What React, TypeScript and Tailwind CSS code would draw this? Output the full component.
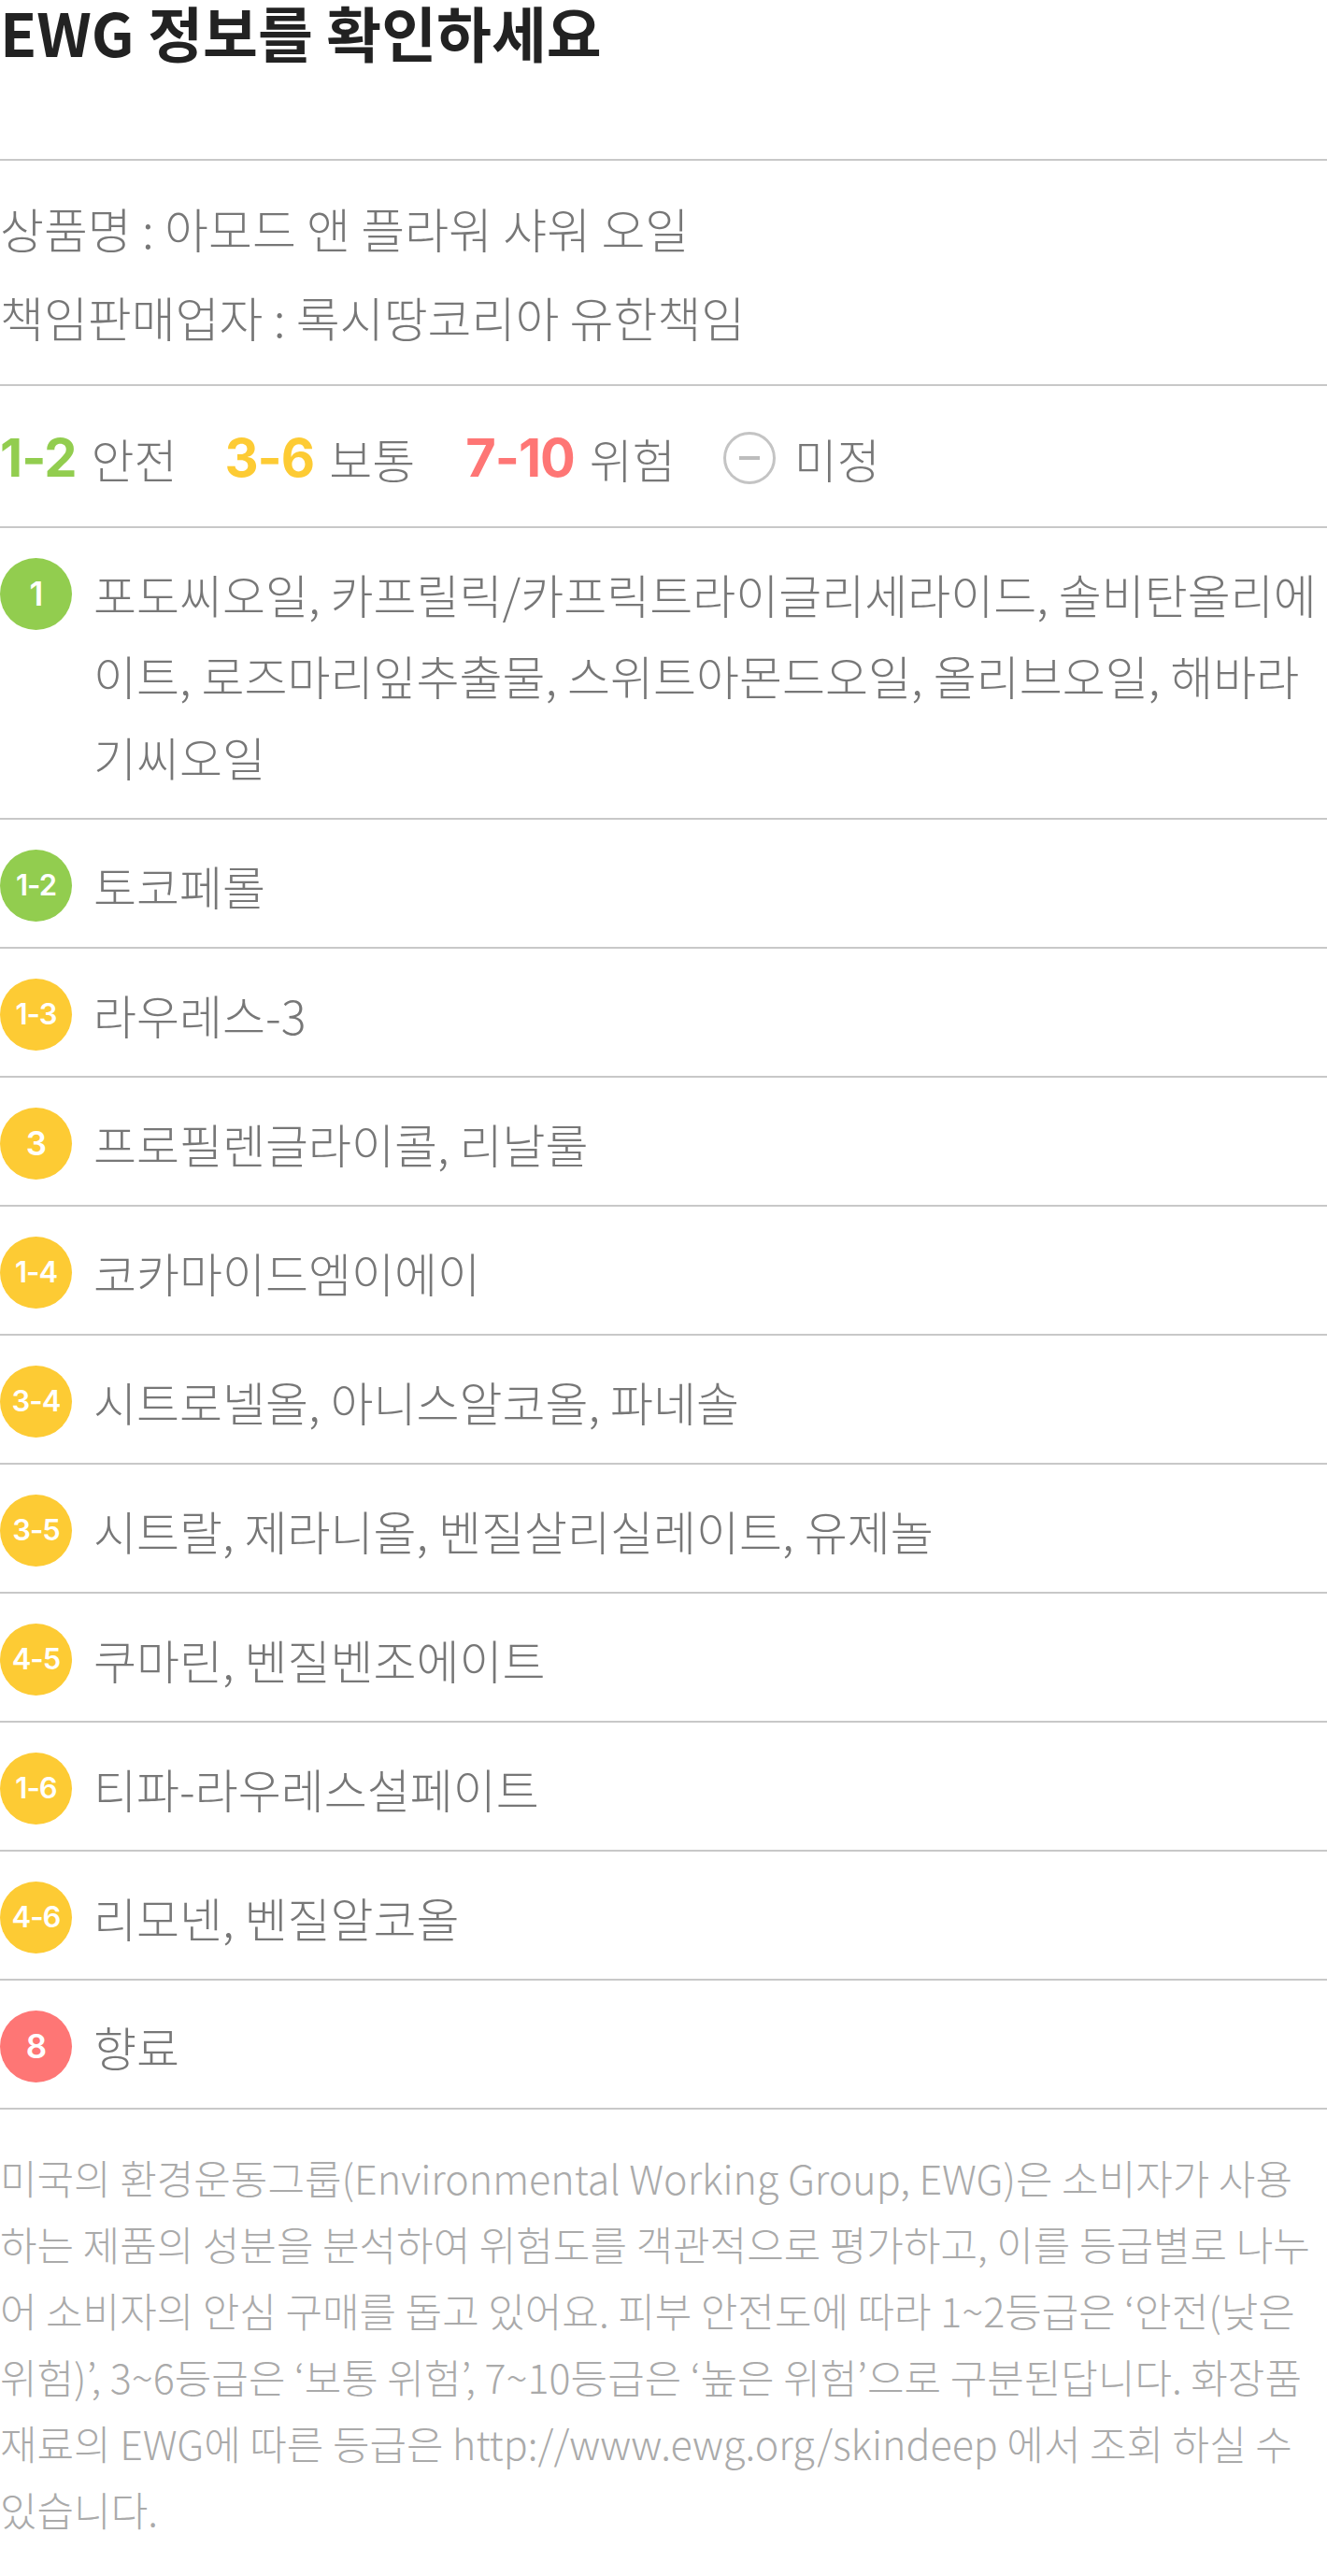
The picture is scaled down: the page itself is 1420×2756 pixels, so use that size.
const items = [
  { grade: "1", level: "safe", text: "포도씨오일, 카프릴릭/카프릭트라이글리세라이드, 솔비탄올리에이트, 로즈마리잎추출물, 스위트아몬드오일, 올리브오일, 해바라기씨오일" },
  { grade: "1-2", level: "safe", text: "토코페롤" },
  { grade: "1-3", level: "mid", text: "라우레스-3" },
  { grade: "3", level: "mid", text: "프로필렌글라이콜, 리날룰" },
  { grade: "1-4", level: "mid", text: "코카마이드엠이에이" },
  { grade: "3-4", level: "mid", text: "시트로넬올, 아니스알코올, 파네솔" },
  { grade: "3-5", level: "mid", text: "시트랄, 제라니올, 벤질살리실레이트, 유제놀" },
  { grade: "4-5", level: "mid", text: "쿠마린, 벤질벤조에이트" },
  { grade: "1-6", level: "mid", text: "티파-라우레스설페이트" },
  { grade: "4-6", level: "mid", text: "리모넨, 벤질알코올" },
  { grade: "8", level: "high", text: "향료" },
];

const badgeColor: Record<string, string> = {
  safe: "bg-[#92cd4f]",
  mid: "bg-[#fdcb34]",
  high: "bg-[#fe7675]",
};

const Badge = ({ grade, level }: { grade: string; level: string }) => (
  <div className="h-[87px] flex items-center shrink-0">
    <span
      className={`w-[77px] h-[77px] rounded-full flex items-center justify-center text-white font-semibold font-['Inter',sans-serif] tracking-[-1px] ${badgeColor[level]} ${
        grade.length > 1 ? "text-[31px]" : "text-[35px]"
      }`}
    >
      {grade}
    </span>
  </div>
);

const App = () => {
  return (
    <div className="w-[1420px] bg-white font-['Noto_Sans_CJK_KR','Noto_Sans',sans-serif]">
      <h2 className="text-[64px] font-bold leading-[66px] pb-[104px] text-[#222]">
        EWG 정보를 확인하세요
      </h2>

      <section className="border-t-2 border-[#c8c8c8] pt-[25px] pb-[24px] text-[51px] leading-[95px] text-[#777] font-light">
        <p>상품명 : 아모드 앤 플라워 샤워 오일</p>
        <p>책임판매업자 : 록시땅코리아 유한책임</p>
      </section>

      <section className="border-t-2 border-[#c8c8c8] h-[152px] pt-[4px] flex items-center text-[50px] font-light text-[#777]">
        <span className="font-['Inter',sans-serif] font-bold text-[56px] text-[#92cd4f] tracking-[-1px]">1-2</span>
        <span className="ml-[16px]">안전</span>
        <span className="ml-[51px] font-['Inter',sans-serif] font-bold text-[56px] text-[#fdcb34] tracking-[-1px]">3-6</span>
        <span className="ml-[16px]">보통</span>
        <span className="ml-[54px] font-['Inter',sans-serif] font-bold text-[56px] text-[#fe7675] tracking-[-1px]">7-10</span>
        <span className="ml-[16px]">위험</span>
        <span className="ml-[51px] w-[56px] h-[56px] rounded-full border-[3px] border-[#c4c4c4] flex items-center justify-center">
          <span className="w-[22px] h-[4px] bg-[#bdbdbd]" />
        </span>
        <span className="ml-[20px]">미정</span>
      </section>

      <ul>
        {items.map((item) => (
          <li
            key={item.grade}
            className="border-t-2 border-[#c8c8c8] pt-[27px] pb-[22px] flex items-start gap-[23px]"
          >
            <Badge grade={item.grade} level={item.level} />
            <p className="flex-1 text-[50px] leading-[87px] font-light text-[#777]">{item.text}</p>
          </li>
        ))}
      </ul>

      <p className="border-t-2 border-[#c8c8c8] pt-[37px] pb-[36px] text-[43px] leading-[71px] font-light text-[#aaa]">
        미국의 환경운동그룹(Environmental Working Group, EWG)은 소비자가 사용하는 제품의 성분을 분석하여 위험도를 객관적으로 평가하고, 이를 등급별로 나누어 소비자의 안심 구매를 돕고 있어요. 피부 안전도에 따라 1~2등급은 ‘안전(낮은 위험)’, 3~6등급은 ‘보통 위험’, 7~10등급은 ‘높은 위험’으로 구분된답니다. 화장품 재료의 EWG에 따른 등급은 http://www.ewg.org/skindeep 에서 조회 하실 수 있습니다.
      </p>
    </div>
  );
};

export default App;
